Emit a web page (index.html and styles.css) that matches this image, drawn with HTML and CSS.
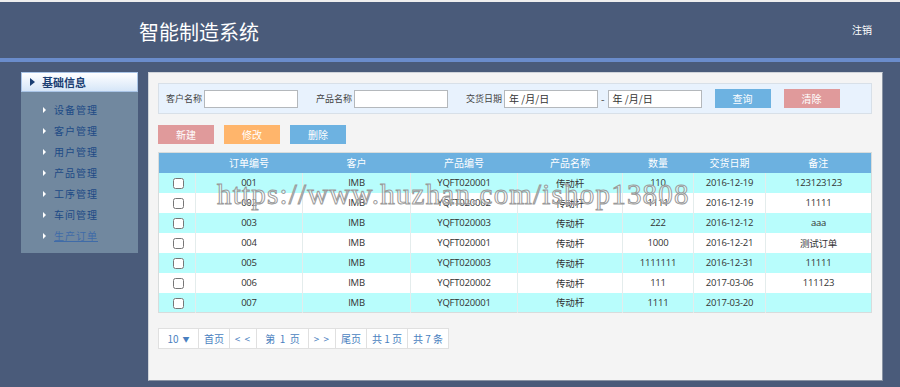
FILE: index.html
```html
<!DOCTYPE html>
<html lang="zh-CN">
<head>
    <meta charset="UTF-8">
    <title>智能制造系统</title>
    <link rel="stylesheet" href="styles.css">
</head>
<body>
    <div class="header">
        <h1>智能制造系统</h1>
        <a class="logout" href="#">注销</a>
    </div>

    <div class="wrap">
        <div class="sidebar">
            <div class="side-title"><span class="arrow"></span>基础信息</div>
            <ul class="side-menu">
                <li><a href="#">设备管理</a></li>
                <li><a href="#">客户管理</a></li>
                <li><a href="#">用户管理</a></li>
                <li><a href="#">产品管理</a></li>
                <li><a href="#">工序管理</a></li>
                <li><a href="#">车间管理</a></li>
                <li class="current"><a href="#">生产订单</a></li>
            </ul>
        </div>

        <div class="main">
            <div class="search-bar">
                <label>客户名称</label>
                <input type="text" class="field">
                <label class="gap">产品名称</label>
                <input type="text" class="field">
                <label class="gap">交货日期</label>
                <span class="field date">年 /月/日</span>
                <span class="dash">-</span>
                <span class="field date">年 /月/日</span>
                <button class="btn btn-blue search-btn">查询</button>
                <button class="btn btn-red clear-btn">清除</button>
            </div>

            <div class="actions">
                <button class="btn btn-red">新建</button>
                <button class="btn btn-orange">修改</button>
                <button class="btn btn-blue">删除</button>
            </div>

            <table class="orders">
                <colgroup>
                    <col style="width:37px">
                    <col style="width:107px">
                    <col style="width:108px">
                    <col style="width:107px">
                    <col style="width:105px">
                    <col style="width:71px">
                    <col style="width:72px">
                    <col>
                </colgroup>
                <thead>
                    <tr>
                        <th></th>
                        <th>订单编号</th>
                        <th>客户</th>
                        <th>产品编号</th>
                        <th>产品名称</th>
                        <th>数量</th>
                        <th>交货日期</th>
                        <th>备注</th>
                    </tr>
                </thead>
                <tbody>
                    <tr><td><input type="checkbox"></td><td>001</td><td>IMB</td><td>YQFT020001</td><td>传动杆</td><td>110</td><td>2016-12-19</td><td>123123123</td></tr>
                    <tr><td><input type="checkbox"></td><td>002</td><td>IMB</td><td>YQFT020002</td><td>传动杆</td><td>1111</td><td>2016-12-19</td><td>11111</td></tr>
                    <tr><td><input type="checkbox"></td><td>003</td><td>IMB</td><td>YQFT020003</td><td>传动杆</td><td>222</td><td>2016-12-12</td><td>aaa</td></tr>
                    <tr><td><input type="checkbox"></td><td>004</td><td>IMB</td><td>YQFT020001</td><td>传动杆</td><td>1000</td><td>2016-12-21</td><td>测试订单</td></tr>
                    <tr><td><input type="checkbox"></td><td>005</td><td>IMB</td><td>YQFT020003</td><td>传动杆</td><td>1111111</td><td>2016-12-31</td><td>11111</td></tr>
                    <tr><td><input type="checkbox"></td><td>006</td><td>IMB</td><td>YQFT020002</td><td>传动杆</td><td>111</td><td>2017-03-06</td><td>111123</td></tr>
                    <tr><td><input type="checkbox"></td><td>007</td><td>IMB</td><td>YQFT020001</td><td>传动杆</td><td>1111</td><td>2017-03-20</td><td></td></tr>
                </tbody>
            </table>

            <div class="pager">
                <span class="size">10 <i>▼</i></span>
                <span>首页</span>
                <span class="arrows">&lt; &lt;</span>
                <span class="page">第 &nbsp;1 &nbsp;页</span>
                <span class="arrows">&gt; &gt;</span>
                <span>尾页</span>
                <span class="total">共 1 页</span>
                <span class="total">共 7 条</span>
            </div>
        </div>
    </div>

    <div class="watermark">https://www.huzhan.com/ishop13808</div>
</body>
</html>
```

FILE: styles.css
```css
* {
    margin: 0;
    padding: 0;
    box-sizing: border-box;
}

body {
    font-family: "Open Sans", "Noto Sans CJK SC", sans-serif;
    font-size: 11px;
    background-color: #4a5b7a;
    color: #333;
    border-top: 2px solid #eeeeee;
    height: 387px;
    overflow: hidden;
    position: relative;
}

ul {
    list-style: none;
}

a {
    text-decoration: none;
}

.header {
    height: 60px;
    border-bottom: 4px solid #6a8ccb;
    display: flex;
    justify-content: space-between;
    padding: 0 28px 0 139px;
}

.header h1 {
    font-family: "Noto Sans CJK SC", sans-serif;
    font-weight: normal;
    font-size: 20px;
    color: #ffffff;
    line-height: 22px;
    margin-top: 19px;
}

.logout {
    color: #ffffff;
    font-family: "Noto Sans CJK SC", sans-serif;
    font-size: 10px;
    margin-top: 20px;
}

.wrap {
    display: flex;
    gap: 10px;
    padding: 10px 0 0 21px;
}

.sidebar {
    width: 117px;
    height: 181px;
    background-color: #71889f;
}

.side-title {
    height: 20px;
    background: linear-gradient(180deg, #ffffff, #d6e6f8);
    border: 1px solid #a9c4e6;
    color: #1b3f73;
    font-family: "Noto Sans CJK SC", sans-serif;
    font-weight: bold;
    font-size: 11px;
    line-height: 18px;
    display: flex;
    align-items: center;
    padding-left: 8px;
}

.arrow {
    width: 0;
    height: 0;
    border-top: 4px solid transparent;
    border-bottom: 4px solid transparent;
    border-left: 5px solid #1b3f73;
    margin-right: 7px;
}

.side-menu {
    padding-top: 7px;
}

.side-menu li {
    height: 21px;
    line-height: 21px;
    padding-left: 22px;
    display: flex;
    align-items: center;
}

.side-menu li::before {
    content: "";
    border-top: 3px solid transparent;
    border-bottom: 3px solid transparent;
    border-left: 3px solid #ffffff;
    margin-right: 8px;
}

.side-menu a {
    color: #1d4a86;
    font-family: "Noto Sans CJK SC", sans-serif;
    font-size: 10px;
    letter-spacing: 1px;
}

.side-menu .current a {
    color: #3f6ba8;
    text-decoration: underline;
}

.main {
    width: 735px;
    height: 309px;
    background-color: #f4f4f4;
    border: 1px solid #d0d4da;
    border-right-color: #8a94a4;
    border-bottom-color: #8a94a4;
    padding: 10px 0 0 9px;
}

.search-bar {
    width: 714px;
    height: 31px;
    background-color: #e8f2fd;
    border: 1px solid #d8e0e8;
    display: flex;
    align-items: center;
    padding-left: 7px;
}

.search-bar label {
    color: #444;
    font-family: "Noto Sans CJK SC", sans-serif;
    font-size: 9px;
    margin-right: 2px;
}

.search-bar .gap {
    margin-left: 18px;
}

.search-bar .field {
    width: 94px;
    height: 18px;
    border: 1px solid #b4b8bc;
    background-color: #ffffff;
    font-size: 10px;
    padding-left: 4px;
    line-height: 16px;
    color: #333;
}

.search-bar .date {
    display: inline-block;
    font-family: "Noto Sans CJK SC", sans-serif;
}

.dash {
    margin: 0 3px 0 3px;
    color: #555;
}

.btn {
    width: 56px;
    height: 19px;
    border: none;
    color: #ffffff;
    font-family: "Noto Sans CJK SC", sans-serif;
    font-size: 10px;
    cursor: pointer;
}

.btn-blue {
    background-color: #6db2e1;
}

.btn-red {
    background-color: #e09a9b;
}

.btn-orange {
    background-color: #ffb56b;
}

.search-btn {
    margin-left: 13px;
}

.clear-btn {
    margin-left: 13px;
}

.actions {
    display: flex;
    gap: 10px;
    margin-top: 11px;
}

.orders {
    margin-top: 8px;
    width: 714px;
    border-collapse: collapse;
    table-layout: fixed;
    border: 1px solid #d8dcdc;
}

.orders th {
    height: 20px;
    background-color: #6cb1e0;
    color: #ffffff;
    font-family: "Noto Sans CJK SC", sans-serif;
    font-weight: normal;
    font-size: 10px;
    text-align: center;
}

.orders td {
    height: 20px;
    text-align: center;
    font-size: 9.5px;
    letter-spacing: -0.2px;
    color: #333;
    border-left: 1px solid #e4ecec;
    padding: 0;
}

.orders td:first-child {
    border-left: none;
}

.orders tbody tr:nth-child(odd) {
    background-color: #b8fdfc;
}

.orders tbody tr:nth-child(even) {
    background-color: #ffffff;
}

.orders input[type="checkbox"] {
    width: 11px;
    height: 11px;
    vertical-align: middle;
    margin-left: 2px;
}

.pager {
    display: flex;
    margin-top: 15px;
    height: 21px;
}

.pager span {
    display: flex;
    align-items: center;
    justify-content: center;
    background-color: #ffffff;
    border: 1px solid #e0e0e0;
    border-left: none;
    color: #4a7fc0;
    font-family: "Noto Sans CJK SC", sans-serif;
    font-size: 10px;
    width: 31px;
}

.pager span:first-child {
    border-left: 1px solid #e0e0e0;
    width: 41px;
}

.pager .size i {
    font-style: normal;
    font-size: 7px;
    margin-left: 4px;
}

.pager .arrows {
    width: 27px;
    letter-spacing: 1px;
}

.pager .page {
    width: 52px;
}

.pager .total {
    width: 41px;
}

.watermark {
    position: absolute;
    left: 217px;
    top: 176px;
    font-family: "Liberation Serif", serif;
    font-size: 29px;
    letter-spacing: 1.2px;
    color: rgba(255, 255, 255, 0.45);
    -webkit-text-stroke: 1px #9a9a9a;
    pointer-events: none;
    white-space: nowrap;
}
```
